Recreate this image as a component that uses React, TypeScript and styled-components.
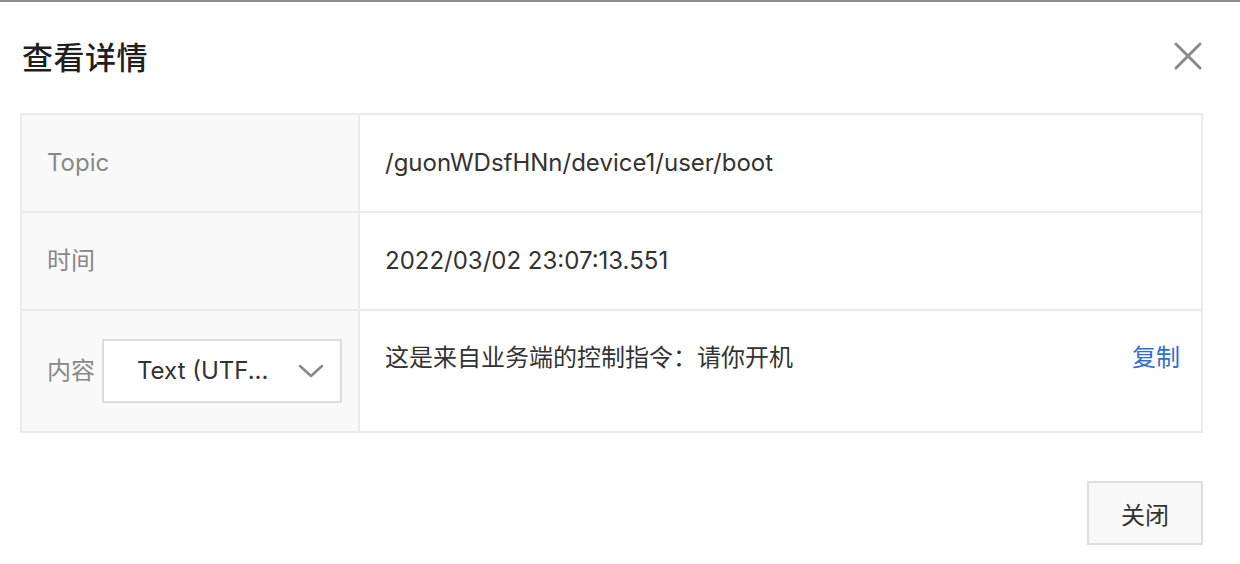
import React from "react";
import styled, { createGlobalStyle } from "styled-components";

const GlobalStyle = createGlobalStyle`
  html, body {
    margin: 0;
    padding: 0;
    background: #fff;
  }
  body {
    font-family: Inter, "Noto Sans CJK SC", "Noto Sans", sans-serif;
    -webkit-font-smoothing: antialiased;
  }
`;

const Dialog = styled.div`
  width: 1240px;
  height: 564px;
  box-sizing: border-box;
  border-top: 2px solid #8c8c8c;
  background: #fff;
`;

const Header = styled.div`
  display: flex;
  align-items: center;
  justify-content: space-between;
  box-sizing: border-box;
  height: 111px;
  padding: 0 37px 4px 22px;
`;

const Title = styled.h2`
  margin: 0;
  font-size: 31px;
  font-weight: 500;
  color: #1f1f1f;
  letter-spacing: 0.5px;
`;

const CloseButton = styled.button`
  display: flex;
  align-items: center;
  justify-content: center;
  width: 30px;
  height: 30px;
  padding: 0;
  border: none;
  background: none;
  cursor: pointer;
`;

const Table = styled.div`
  display: grid;
  grid-template-columns: 338px 1fr;
  grid-template-rows: 98px 98px 122px;
  margin: 0 37px 0 20px;
  border-top: 2px solid #ebebeb;
  border-left: 2px solid #ebebeb;
`;

const Cell = styled.div<{ $label?: boolean; $top?: boolean }>`
  display: flex;
  align-items: ${({ $top }) => ($top ? "flex-start" : "center")};
  box-sizing: border-box;
  padding: ${({ $top }) => ($top ? "31px" : "0")} 21px 0 25px;
  border-right: 2px solid #ebebeb;
  border-bottom: 2px solid #ebebeb;
  background: ${({ $label }) => ($label ? "#f9f9f9" : "#fff")};
  color: ${({ $label }) => ($label ? "#888" : "#333")};
  font-size: 24px;
  line-height: 32px;
  white-space: nowrap;
`;

const Value = styled.span`
  flex: 1;
`;

const Select = styled.div`
  display: flex;
  flex-shrink: 0;
  align-items: center;
  justify-content: space-between;
  box-sizing: border-box;
  width: 240px;
  height: 64px;
  margin-left: 7px;
  padding: 0 16px 0 33px;
  border: 2px solid #dcdcdc;
  background: #fff;
  color: #333;
  font-size: 24px;
`;

const CopyLink = styled.a`
  color: #2f6fd3;
  font-size: 24px;
  cursor: pointer;
`;

const Footer = styled.div`
  display: flex;
  justify-content: flex-end;
  padding: 48px 37px 0 0;
`;

const Button = styled.button`
  box-sizing: border-box;
  width: 116px;
  height: 64px;
  border: 2px solid #dedede;
  background: #f8f8f8;
  color: #333;
  font-family: inherit;
  font-size: 24px;
  cursor: pointer;
`;

const App: React.FC = () => (
  <>
    <GlobalStyle />
    <Dialog>
      <Header>
        <Title>查看详情</Title>
        <CloseButton aria-label="关闭">
          <svg width="28" height="28" viewBox="0 0 28 28">
            <path d="M2 2 L26 26 M26 2 L2 26" stroke="#8a8a8a" strokeWidth="3" strokeLinecap="round" />
          </svg>
        </CloseButton>
      </Header>
      <Table>
        <Cell $label>Topic</Cell>
        <Cell>/guonWDsfHNn/device1/user/boot</Cell>
        <Cell $label>时间</Cell>
        <Cell>2022/03/02 23:07:13.551</Cell>
        <Cell $label>
          内容
          <Select>
            <span>Text (UTF...</span>
            <svg width="26" height="14" viewBox="0 0 26 14">
              <path d="M2 2 L13 12 L24 2" fill="none" stroke="#888" strokeWidth="2.5" strokeLinecap="round" strokeLinejoin="round" />
            </svg>
          </Select>
        </Cell>
        <Cell $top>
          <Value>这是来自业务端的控制指令：请你开机</Value>
          <CopyLink>复制</CopyLink>
        </Cell>
      </Table>
      <Footer>
        <Button>关闭</Button>
      </Footer>
    </Dialog>
  </>
);

export default App;
